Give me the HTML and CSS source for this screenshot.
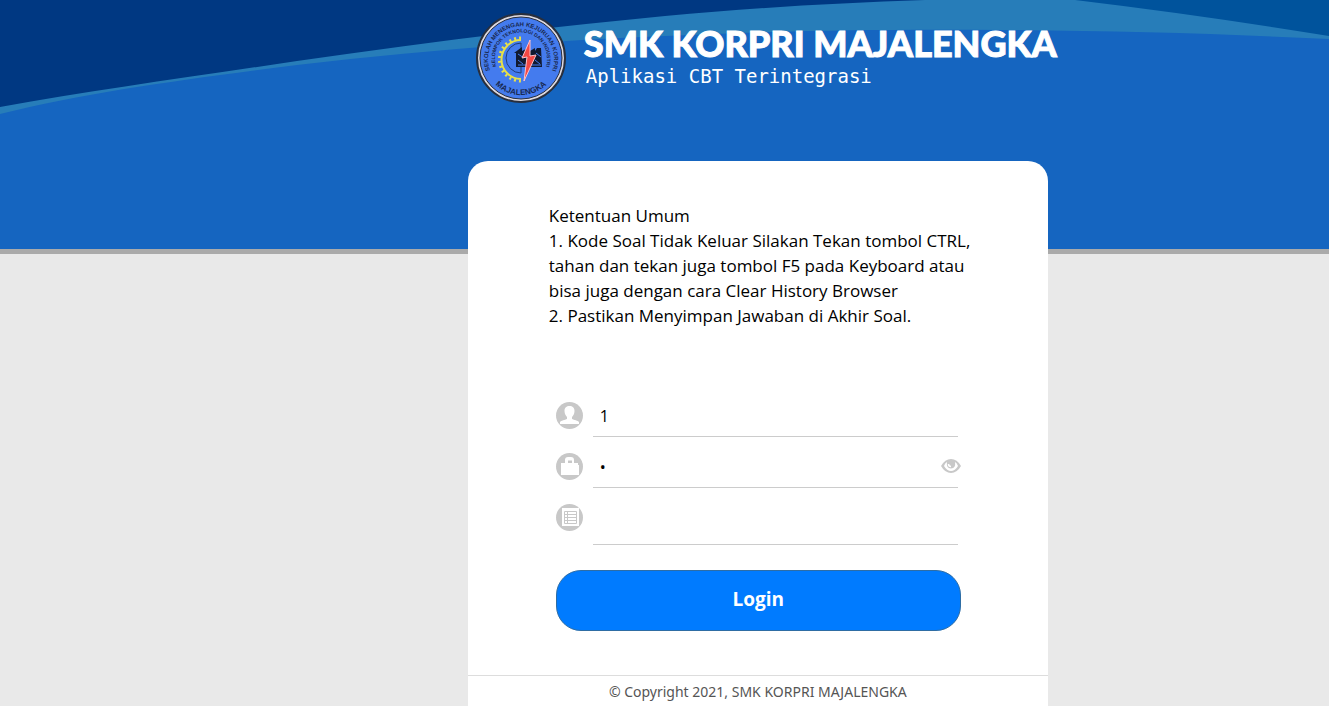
FILE: index.html
```html
<!DOCTYPE html>
<html lang="id">
<head>
  <meta charset="UTF-8">
  <meta name="viewport" content="width=device-width, initial-scale=1.0">
  <title>SMK KORPRI MAJALENGKA</title>
  <link rel="stylesheet" href="styles.css">
</head>
<body>
  <header class="header">
    <svg class="waves" viewBox="0 0 1329 249" preserveAspectRatio="none" aria-hidden="true">
      <rect width="1329" height="249" fill="#277db9"/>
      <path fill="#1565c0" d="M0 114C90 92 180 80 297 65C420 51 540 41 665 36C790 30 900 29 1004 30C1120 31 1225 34 1329 39V249H0Z"/>
      <path fill="#003882" d="M0 0H925C835 3 750 8 665 16C540 28 420 43 297 61C190 77 95 90 0 107Z"/>
      <path fill="#00539c" d="M1075 0H1329V36Q1200 15 1075 0Z"/>
    </svg>
    <div class="brand">
      <svg class="logo" viewBox="0 0 90 90" role="img" aria-label="Logo SMK KORPRI">
        <defs>
          <path id="ring-outer" d="M15 60A33 33 0 1 1 75 60"/>
          <path id="ring-inner" d="M25 62A26 26 0 1 1 65 62"/>
          <path id="ring-bottom" d="M10 57A37 37 0 0 0 80 57"/>
        </defs>
        <circle cx="45" cy="45" r="44" fill="#ded9df" stroke="#292f3d" stroke-width="2"/>
        <circle cx="45" cy="45" r="41" fill="#447bee" stroke="#292f3d"/>
        <text class="logo-text"><textPath href="#ring-outer" startOffset="50%">SEKOLAH MENENGAH KEJURUAN KORPRI</textPath></text>
        <text class="logo-text logo-small"><textPath href="#ring-inner" startOffset="50%">KELOMPOK TEKNOLOGI DAN INDUSTRI</textPath></text>
        <text class="logo-text logo-city"><textPath href="#ring-bottom" startOffset="50%">MAJALENGKA</textPath></text>
        <path d="M45 27A19 19 0 0 0 45 66" fill="none" stroke="#e6e04a" stroke-width="2"/>
        <path d="M45 25A21 21 0 0 0 45 68" fill="none" stroke="#e6e04a" stroke-width="3" stroke-dasharray="2 3"/>
        <path d="M45 30A15 15 0 0 0 45 60Z" fill="none" stroke="#203c78"/>
        <path d="M40 54V40L38 40L46 34V38L54 34V38L59 35V38L61 35H65L66 54Z" fill="#111a30"/>
        <path d="M42 41L48 45M51 40L57 45M60 40L65 44M42 47L47 51M59 47L64 51M42 52H65" fill="none" stroke="#447bee"/>
        <path d="M54 27L46 45L51 44L48 68L60 42L54 43Z" fill="#f44945" stroke="#ffc3ca" stroke-width="1"/>
      </svg>
      <div class="brand-text">
        <h1>SMK KORPRI MAJALENGKA</h1>
        <p>Aplikasi CBT Terintegrasi</p>
      </div>
    </div>
  </header>

  <main class="card">
    <div class="rules">
      Ketentuan Umum<br>
      1. Kode Soal Tidak Keluar Silakan Tekan tombol CTRL, tahan dan tekan juga tombol F5 pada Keyboard atau bisa juga dengan cara Clear History Browser<br>
      2. Pastikan Menyimpan Jawaban di Akhir Soal.
    </div>

    <form class="login-form">
      <div class="field">
        <label for="username" aria-label="Username">
          <svg class="icon" viewBox="0 0 27 27">
            <circle cx="13.500" cy="13.500" r="13.500"/>
            <path d="M13.500 4C16.500 4 18.500 5.500 18.500 9C18.500 12 17 14 16 15V17C18 18 22 18.500 23 20V22H4V20C5 18.500 9 18 11 17V15C10 14 8.500 12 8.500 9C8.500 5.500 10.500 4 13.500 4Z" fill="#fff"/>
          </svg>
        </label>
        <input type="text" id="username" value="1">
      </div>
      <div class="field">
        <label for="password" aria-label="Password">
          <svg class="icon" viewBox="0 0 27 27">
            <circle cx="13.500" cy="13.500" r="13.500"/>
            <path d="M5 10H9V7Q9 4 12 4H15Q18 4 18 7V10H22V12H23V22H5ZM12 10H16V7.500H12Z" fill="#fff" fill-rule="evenodd"/>
          </svg>
        </label>
        <input type="password" id="password" value="1">
        <button type="button" class="show-password" aria-label="Lihat password">
          <svg viewBox="0 0 20 14">
            <path d="M0 7Q4 0 10 0Q16 0 20 7Q16 14 10 14Q4 14 0 7Z" fill="#c8c8c8"/>
            <path d="M3 7Q4 4 6 3Q5 9 10 9.500Q15 9 14 3Q16 4 17 7Q14 12 10 12Q6 12 3 7Z" fill="#fff"/>
            <path d="M7.500 5Q7.500 7.500 10 7.500" fill="none" stroke="#fff" stroke-width="1.500"/>
          </svg>
        </button>
      </div>
      <div class="field field-token">
        <label for="token" aria-label="Token">
          <svg class="icon" viewBox="0 0 27 27">
            <circle cx="13.500" cy="13.500" r="13.500"/>
            <path d="M6 4H23V22H6Z" fill="#fff"/>
            <path d="M8.500 7.500H20.500V19.500H8.500ZM8.500 10.500H20.500M8.500 13.500H20.500M8.500 16.500H20.500M11.500 7.500V19.500" fill="none" stroke="#c8c8c8"/>
          </svg>
        </label>
        <input type="text" id="token">
      </div>
      <button type="submit" class="login-btn">Login</button>
    </form>

    <footer class="footer">© Copyright 2021, SMK KORPRI MAJALENGKA</footer>
  </main>
</body>
</html>
```
FILE: styles.css
```css
* {
  box-sizing: border-box;
}

body {
  display: flex;
  flex-direction: column;
  min-height: 100vh;
  margin: 0;
  background-color: #e9e9e9;
  font-family: "Open Sans", "Noto Sans", sans-serif;
  color: #000;
}

.header {
  position: relative;
  height: 254px;
  padding-left: 35.2%;
  background-color: #1565c0;
  border-bottom: 5px solid #aaa;
}

/* curved stripes behind the title */
.waves {
  position: absolute;
  top: 0;
  left: 0;
  width: 100%;
  height: 100%;
}

.brand {
  position: relative;
  display: flex;
  gap: 18px;
  padding: 13px 0 0 8px;
}

.logo {
  flex: none;
  width: 90px;
  height: 90px;
}

.logo-text {
  font-family: "Liberation Sans", sans-serif;
  font-size: 6px;
  font-weight: bold;
  text-anchor: middle;
  fill: #182850;
}

.logo-small {
  font-size: 5px;
}

.logo-city {
  font-size: 8px;
}

.brand-text {
  padding-top: 8px;
  color: #fff;
  white-space: nowrap;
}

.brand-text h1 {
  margin: 0;
  font-family: "Lato Black", Lato, sans-serif;
  font-size: 36px;
  font-weight: 900;
  line-height: 44px;
  -webkit-text-stroke: 1px #fff;
}

.brand-text p {
  margin: 0;
  padding-left: 2px;
  font-family: "DejaVu Sans Mono", monospace;
  font-size: 19px;
  line-height: 22px;
}

.card {
  position: relative;
  display: flex;
  flex: 1;
  flex-direction: column;
  width: 100%;
  max-width: 580px;
  margin: -93px 0 0 35.2%;
  background-color: #fff;
  border-radius: 20px 20px 0 0;
}

.rules {
  padding: 42px 70px 0 81px;
  font-size: 17px;
  line-height: 25px;
}

.login-form {
  padding: 67px 87px 44px 88px;
}

.field {
  position: relative;
  display: flex;
  align-items: flex-start;
  gap: 10px;
  height: 51px;
  padding-right: 3px;
}

.field-token {
  height: 73px;
}

.field label {
  padding-top: 7px;
}

.icon {
  display: block;
  width: 27px;
  height: 27px;
  fill: #c8c8c8;
}

.field input {
  flex: 1;
  min-width: 0;
  height: 42px;
  padding: 0 7px;
  border: 0;
  border-bottom: 1px solid #ccc;
  outline: none;
  background: none;
  font-family: inherit;
  font-size: 16px;
}

.field-token input {
  height: 48px;
}

.show-password {
  position: absolute;
  top: 13px;
  right: 0;
  padding: 0;
  border: 0;
  background: none;
  cursor: pointer;
}

.show-password svg {
  display: block;
  width: 20px;
  height: 14px;
}

.login-btn {
  display: block;
  width: 100%;
  height: 61px;
  padding-bottom: 4px;
  border: 1px solid #2e6da4;
  border-radius: 25px;
  background-color: #007bff;
  color: #fff;
  font-family: inherit;
  font-size: 19px;
  font-weight: bold;
  cursor: pointer;
}

.footer {
  padding-top: 5px;
  border-top: 1px solid #ddd;
  color: #555;
  font-family: "Noto Sans", sans-serif;
  font-size: 14px;
  line-height: 22px;
  text-align: center;
}
```
